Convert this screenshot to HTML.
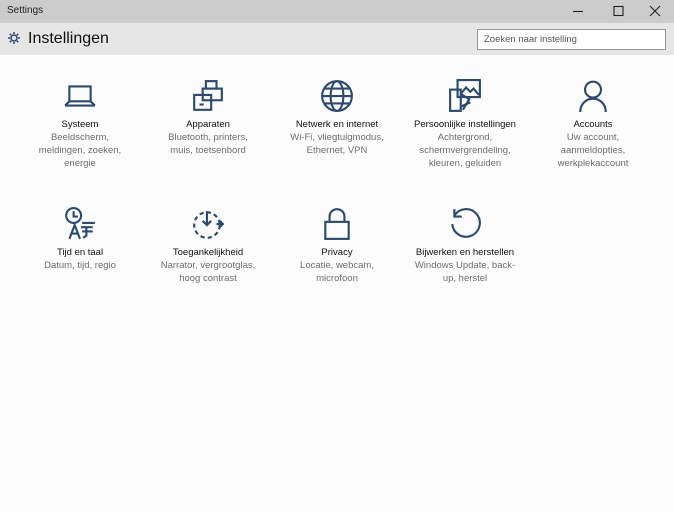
<!DOCTYPE html>
<html><head><meta charset="utf-8"><style>
*{margin:0;padding:0;box-sizing:border-box}
body{width:674px;height:511px;background:#fcfcfc;font-family:"Liberation Sans",sans-serif;position:relative;overflow:hidden}
.tb{position:absolute;left:0;top:0;width:674px;height:23px;background:#cccccc}
.tb .t{position:absolute;left:7px;top:5px;font-size:10px;color:#222}
.hd{position:absolute;left:0;top:23px;width:674px;height:32px;background:#e6e6e6}
.hd .t{position:absolute;left:28px;top:7px;font-size:16px;color:#111}
.sb{position:absolute;left:477px;top:29px;width:189px;height:21px;border:1px solid #999;background:#fff;font-size:9.5px;color:#555;padding:4px 6px}
.it{position:absolute;width:128px;text-align:center}
.it svg{display:block;margin:0 auto}
.it .n{font-size:9.5px;color:#111;line-height:13px;margin-top:5px}
.it .d{font-size:9.5px;color:#6d6d6d;line-height:13px}
</style></head><body>
<div class="tb"><span class="t">Settings</span>
<svg style="position:absolute;left:560px;top:0" width="114" height="23" fill="none" stroke="#222" stroke-width="1.1">
<line x1="13" y1="11.5" x2="23" y2="11.5"/><rect x="54" y="6.5" width="9" height="9"/><path d="M90 6l10 10M100 6l-10 10"/></svg></div>
<div class="hd">
<svg style="position:absolute;left:7px;top:8px" width="14" height="14" viewBox="0 0 14 14" fill="none" stroke="#2c4a6e" stroke-width="1.5"><circle cx="7" cy="7" r="3"/><path d="M7 1v2M7 11v2M1 7h2M11 7h2M2.8 2.8l1.4 1.4M9.8 9.8l1.4 1.4M2.8 11.2l1.4-1.4M9.8 4.2l1.4-1.4"/></svg>
<span class="t">Instellingen</span></div>
<div class="sb">Zoeken naar instelling</div>

<div class="it" style="left:16px;top:79px"><svg width="34" height="34" viewBox="0 0 32 32" fill="none" stroke="#2c4a6e" stroke-width="2"><rect x="6" y="7" width="20" height="14"/><path d="M2 25h28M6 21l-4 4"/><path d="M26 21l4 4"/></svg>
<div class="n">Systeem</div><div class="d">Beeldscherm,<br>meldingen, zoeken,<br>energie</div></div>

<div class="it" style="left:144px;top:79px"><svg width="34" height="34" viewBox="0 0 32 32" fill="none" stroke="#2c4a6e" stroke-width="2"><rect x="14" y="2" width="10" height="7"/><rect x="11" y="9" width="18" height="11"/><rect x="3" y="15" width="16" height="14"/><path d="M8 24h4"/></svg>
<div class="n">Apparaten</div><div class="d">Bluetooth, printers,<br>muis, toetsenbord</div></div>

<div class="it" style="left:273px;top:79px"><svg width="34" height="34" viewBox="0 0 32 32" fill="none" stroke="#2c4a6e" stroke-width="2"><circle cx="16" cy="16" r="14"/><ellipse cx="16" cy="16" rx="6" ry="14"/><path d="M2 16h28M4 9h24M4 23h24"/></svg>
<div class="n">Netwerk en internet</div><div class="d">Wi-Fi, vliegtuigmodus,<br>Ethernet, VPN</div></div>

<div class="it" style="left:401px;top:79px"><svg width="34" height="34" viewBox="0 0 32 32" fill="none" stroke="#2c4a6e" stroke-width="2"><rect x="9" y="1" width="21" height="16"/><path d="M12 14l5-6 4 4 3-3 5 6"/><rect x="2" y="10" width="10" height="20"/><path d="M12 14l8 5-6 10M12 26l9-4"/></svg>
<div class="n">Persoonlijke instellingen</div><div class="d">Achtergrond,<br>schermvergrendeling,<br>kleuren, geluiden</div></div>

<div class="it" style="left:529px;top:79px"><svg width="34" height="34" viewBox="0 0 32 32" fill="none" stroke="#2c4a6e" stroke-width="2"><circle cx="16" cy="10" r="7.5"/><path d="M4 31c0-7 5-12.5 12-12.5S28 24 28 31"/></svg>
<div class="n">Accounts</div><div class="d">Uw account,<br>aanmeldopties,<br>werkplekaccount</div></div>

<div class="it" style="left:16px;top:207px"><svg width="34" height="34" viewBox="0 0 32 32" fill="none" stroke="#2c4a6e" stroke-width="2"><circle cx="10" cy="8" r="7"/><path d="M10 4v5h4"/><path d="M6 30l5-13 5 13M8 25h6M18 15h12M17 19h11M22 19v8l-3 2M18 23h10"/></svg>
<div class="n">Tijd en taal</div><div class="d">Datum, tijd, regio</div></div>

<div class="it" style="left:144px;top:207px"><svg width="34" height="34" viewBox="0 0 32 32" fill="none" stroke="#2c4a6e" stroke-width="2" stroke-dasharray="4 3"><circle cx="15" cy="17" r="12"/><path stroke-dasharray="none" d="M15 4v13M11 13l4 4 4-4M24 16h6M27 13l3 3-3 3"/></svg>
<div class="n">Toegankelijkheid</div><div class="d">Narrator, vergrootglas,<br>hoog contrast</div></div>

<div class="it" style="left:273px;top:207px"><svg width="34" height="34" viewBox="0 0 32 32" fill="none" stroke="#2c4a6e" stroke-width="2"><rect x="5" y="14" width="22" height="16"/><path d="M9 14V9a7 7 0 0 1 14 0v5"/></svg>
<div class="n">Privacy</div><div class="d">Locatie, webcam,<br>microfoon</div></div>

<div class="it" style="left:401px;top:207px"><svg width="34" height="34" viewBox="0 0 32 32" fill="none" stroke="#2c4a6e" stroke-width="2"><path d="M6 8A13 13 0 1 1 4 16"/><path d="M6 2v7h7"/></svg>
<div class="n">Bijwerken en herstellen</div><div class="d">Windows Update, back-<br>up, herstel</div></div>
</body></html>
